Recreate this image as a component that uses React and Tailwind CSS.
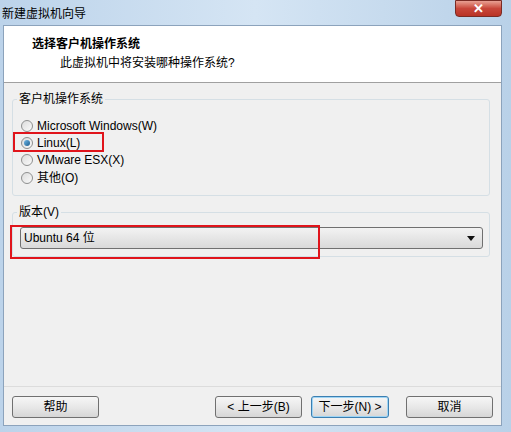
import React from 'react';

const font = { fontFamily: '"Liberation Sans", "Noto Sans CJK SC", sans-serif' };

const Radio = ({ checked, label }) => (
  <div className="flex items-center h-[17.4px]">
    <span className="w-[12px] h-[12px] rounded-full border border-[#8e8f8f] bg-gradient-to-br from-[#dcdcdc] to-[#fafafa] flex items-center justify-center ml-[8px]">
      {checked && <span className="w-[6px] h-[6px] rounded-full bg-gradient-to-br from-[#6fb8e8] to-[#1d5f8f]" />}
    </span>
    <span className="ml-[4px] text-[12px] text-black">{label}</span>
  </div>
);

const Btn = ({ children, focus, w }) => (
  <button
    className={
      'h-[22px] rounded-[3px] border text-[12px] text-black bg-gradient-to-b from-[#f6f6f6] via-[#e8e8e8] to-[#d6d6d6] ' +
      (focus ? 'border-[#3c7fb1] shadow-[inset_0_0_0_1px_#9fd5f5]' : 'border-[#707070]') +
      ' ' + w
    }
  >
    {children}
  </button>
);

export default function App() {
  return (
    <div className="w-[511px] h-[432px] bg-gradient-to-r from-[#bcd3ea] via-[#d5e5f4] to-[#b9d1e8] flex flex-col overflow-hidden" style={font}>
      <div className="h-[25px] flex items-start justify-between relative">
        <span className="text-[12px] text-black ml-[2px] mt-[5px]">新建虚拟机向导</span>
        <div className="w-[47px] h-[17px] mr-[9px] rounded-b-[4px] border border-[#7a2b24] bg-gradient-to-b from-[#e8a093] via-[#c8463a] to-[#b93325] flex items-center justify-center">
          <span className="text-white text-[13px] font-bold leading-none">✕</span>
        </div>
      </div>
      <div className="flex flex-1 ml-[3px] mr-[9px] mb-[6px] border border-[#8ca3bc]">
        <div className="flex-1 flex flex-col bg-[#f0f0f0]">
          <div className="h-[57px] bg-white border-b border-[#a0a0a0] flex flex-col">
            <div className="ml-[28px] mt-[10px] text-[12px] font-bold text-black leading-[16px]">选择客户机操作系统</div>
            <div className="ml-[56px] mt-[3px] text-[12px] text-black leading-[16px]">此虚拟机中将安装哪种操作系统?</div>
          </div>
          <div className="flex-1 flex flex-col pl-[8px] pr-[11px] pt-[9px]">
            <fieldset className="border border-[#d5dfe5] rounded-[3px] h-[104px] px-0 pb-0 m-0">
              <legend className="ml-[4px] px-[2px] text-[12px] text-black leading-[14px]">客户机操作系统</legend>
              <div className="flex flex-col mt-[11px] relative">
                <Radio label="Microsoft Windows(W)" />
                <div className="relative">
                  <Radio checked label="Linux(L)" />
                  <div className="absolute left-[0px] top-[-2px] w-[91px] h-[20px] border-2 border-[#e0141b]" />
                </div>
                <Radio label="VMware ESX(X)" />
                <Radio label="其他(O)" />
              </div>
            </fieldset>
            <fieldset className="border border-[#d5dfe5] rounded-[3px] h-[52px] mt-[9px] px-0 pb-0 m-0">
              <legend className="ml-[4px] px-[2px] text-[12px] text-black leading-[14px]">版本(V)</legend>
              <div className="relative mt-[8px] ml-[7px] mr-[6px]">
                <div className="h-[22px] rounded-[3px] border border-[#707070] bg-gradient-to-b from-[#f3f3f3] via-[#e6e6e6] to-[#d9d9d9] flex items-center justify-between">
                  <span className="ml-[3px] text-[12px] text-black">Ubuntu 64 位</span>
                  <svg width="8" height="5" viewBox="0 0 8 5" className="mr-[7px]"><path d="M0 0 H8 L4 5 Z" fill="#111" /></svg>
                </div>
                <div className="absolute left-[-10px] top-[-2px] w-[310px] h-[34px] border-2 border-[#e0141b]" />
              </div>
            </fieldset>
            <div className="flex-1" />
          </div>
          <div className="h-[39px] border-t border-[#dcdcdc] flex items-start pt-[9px] px-[8px]">
            <Btn w="w-[87px]">帮助</Btn>
            <div className="flex-1" />
            <Btn w="w-[87px]">&lt; 上一步(B)</Btn>
            <div className="w-[9px]" />
            <Btn focus w="w-[78px]">下一步(N) &gt;</Btn>
            <div className="w-[17px]" />
            <Btn w="w-[87px]">取消</Btn>
          </div>
        </div>
      </div>
    </div>
  );
}
